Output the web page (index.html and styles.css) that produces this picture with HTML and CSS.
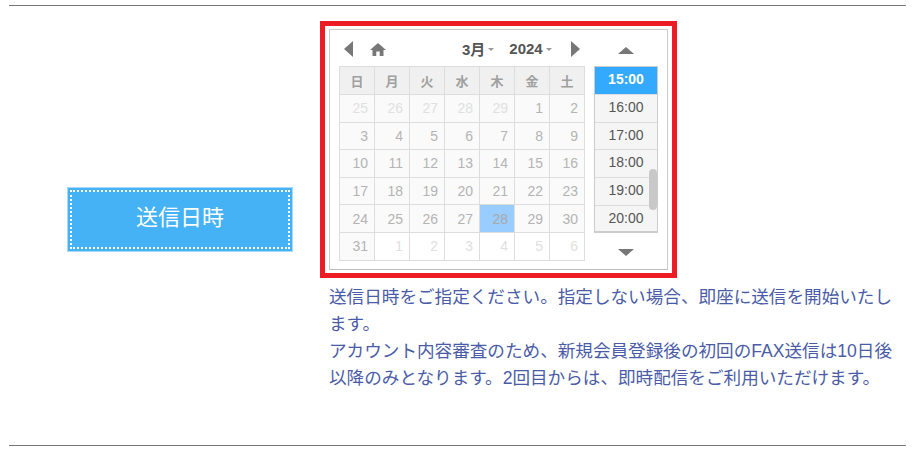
FILE: index.html
```html
<!DOCTYPE html>
<html lang="ja">
<head>
<meta charset="utf-8">
<title>送信日時</title>
<link rel="stylesheet" href="styles.css">
</head>
<body>
<div class="page">
  <div class="row">
    <div class="label-col">
      <div class="label"><div class="label-in">送信日時</div></div>
    </div>
    <div class="main-col">
      <div class="red">
        <div class="picker">
          <div class="cal">
            <div class="nav">
              <svg class="ico-arrow" viewBox="0 0 9 16"><path d="M9 0V16L0 8Z"/></svg>
              <svg class="ico-home" viewBox="0 0 16 13"><path d="M8 0L16 7H13.5V13H9.7V8.5H6.3V13H2.5V7H0Z"/></svg>
              <div class="sel month">3月<i class="caret"></i></div>
              <div class="sel year">2024<i class="caret"></i></div>
              <svg class="ico-arrow next" viewBox="0 0 9 16"><path d="M0 0V16L9 8Z"/></svg>
            </div>
            <table class="days">
              <thead><tr><th>日</th><th>月</th><th>火</th><th>水</th><th>木</th><th>金</th><th>土</th></tr></thead>
              <tbody>
                <tr><td class="off">25</td><td class="off">26</td><td class="off">27</td><td class="off">28</td><td class="off">29</td><td>1</td><td>2</td></tr>
                <tr><td>3</td><td>4</td><td>5</td><td>6</td><td>7</td><td>8</td><td>9</td></tr>
                <tr><td>10</td><td>11</td><td>12</td><td>13</td><td>14</td><td>15</td><td>16</td></tr>
                <tr><td>17</td><td>18</td><td>19</td><td>20</td><td>21</td><td>22</td><td>23</td></tr>
                <tr><td>24</td><td>25</td><td>26</td><td>27</td><td class="today">28</td><td>29</td><td>30</td></tr>
                <tr><td>31</td><td class="off">1</td><td class="off">2</td><td class="off">3</td><td class="off">4</td><td class="off">5</td><td class="off">6</td></tr>
              </tbody>
            </table>
          </div>
          <div class="times">
            <div class="time-btn up"><svg class="tri" viewBox="0 0 16 7"><path d="M8 0L16 7H0Z"/></svg></div>
            <div class="list">
              <div class="t on">15:00</div>
              <div class="t">16:00</div>
              <div class="t">17:00</div>
              <div class="t">18:00</div>
              <div class="t">19:00</div>
              <div class="t">20:00</div>
              <div class="thumb"></div>
            </div>
            <div class="time-btn"><svg class="tri" viewBox="0 0 16 7"><path d="M0 0H16L8 7Z"/></svg></div>
          </div>
        </div>
      </div>
      <p class="note">送信日時をご指定ください。指定しない場合、即座に送信を開始いたします。<br>アカウント内容審査のため、新規会員登録後の初回のFAX送信は10日後以降のみとなります。2回目からは、即時配信をご利用いただけます。</p>
    </div>
  </div>
</div>
</body>
</html>
```
FILE: styles.css
```css
* { box-sizing: border-box; }
html, body { margin: 0; padding: 0; background: #fff; }
body { font-family: "Liberation Sans", "Noto Sans CJK JP", sans-serif; overflow: hidden; }
.page { margin: 5px 12px 0 9px; height: 441px; border-top: 1px solid #777; border-bottom: 1px solid #777; }
.row { display: flex; align-items: center; height: 427px; }
.label-col { width: 311px; flex: none; padding-left: 58px; }
.label { width: 226px; height: 65px; background: #45b2f5; border: 1px solid #a5dafb; padding: 2px; }
.label-in { height: 100%; border: 2px dotted #fff; color: #fff; font: 22px/46px "Noto Sans CJK JP", sans-serif; text-align: center; }
.main-col { flex: 1; min-width: 0; align-self: flex-start; padding-top: 15px; }
.red { width: 357px; height: 257px; border: 5px solid #ed1c24; padding: 3px 4px; }
.picker { display: flex; gap: 9px; height: 241px; border: 1px solid #ccc; border-bottom-color: #bbb; padding: 0 9px; }
.cal { width: 246px; flex: none; }
.nav { display: flex; align-items: center; height: 36px; padding: 0 0 0 5px; }
.nav svg { fill: #777; flex: none; }
.ico-arrow { width: 9px; height: 16px; margin-top: 1px; }
.ico-home { width: 16px; height: 13px; margin-left: 17px; margin-top: 2px; }
.ico-arrow.next { margin-left: 19px; }
.sel { font-weight: bold; font-size: 15px; color: #555; display: flex; align-items: center; }
.month { margin-left: 76px; }
.year { margin-left: 15px; }
.caret { width: 0; height: 0; margin-left: 3px; margin-top: 2px; border-style: solid; border-color: #999 transparent transparent; border-width: 3px 3.5px 0; }
.days { border-collapse: collapse; table-layout: fixed; width: 246px; height: 194px; }
.days th, .days td { border: 1px solid #ddd; width: 35px; padding: 0; }
.days th { background: #f0f0f0; color: #a0a0a0; font: bold 13px/1 "Noto Sans CJK JP", sans-serif; text-align: center; height: 28px; }
.days td { background: #fafafa; color: #b4b4b4; font-size: 14px; text-align: right; padding-right: 6px; height: 27.6px; }
.days td.off { background: #fff; color: #e0e0e0; }
.days tbody tr:first-child td.off { background: #fafafa; }
.days td.today { background: #99ccff; color: #a8a8a8; }
.times { width: 64px; flex: none; }
.time-btn { height: 36px; display: flex; align-items: center; justify-content: center; padding-top: 3px; }
.time-btn.up { padding-top: 5px; }
.tri { width: 16px; height: 7px; fill: #777; }
.list { position: relative; height: 167px; border: 1px solid #ccc; border-bottom: 2px solid #ccc; background: #f5f5f5; overflow: hidden; }
.t { height: 27.8px; border-bottom: 1px solid #ddd; font-size: 14px; line-height: 24px; text-align: center; color: #555; }
.t:last-of-type { border-bottom: 0; }
.t.on { background: #33a9ff; color: #fff; font-weight: bold; }
.thumb { position: absolute; right: 0; top: 102px; width: 8px; height: 41px; border-radius: 4px; background: #c8c8c8; }
.note { margin: 6px 0 0 9px; font: 17.6px/27px "Liberation Sans", "Noto Sans CJK JP", sans-serif; color: #4a5ca8; }
```
